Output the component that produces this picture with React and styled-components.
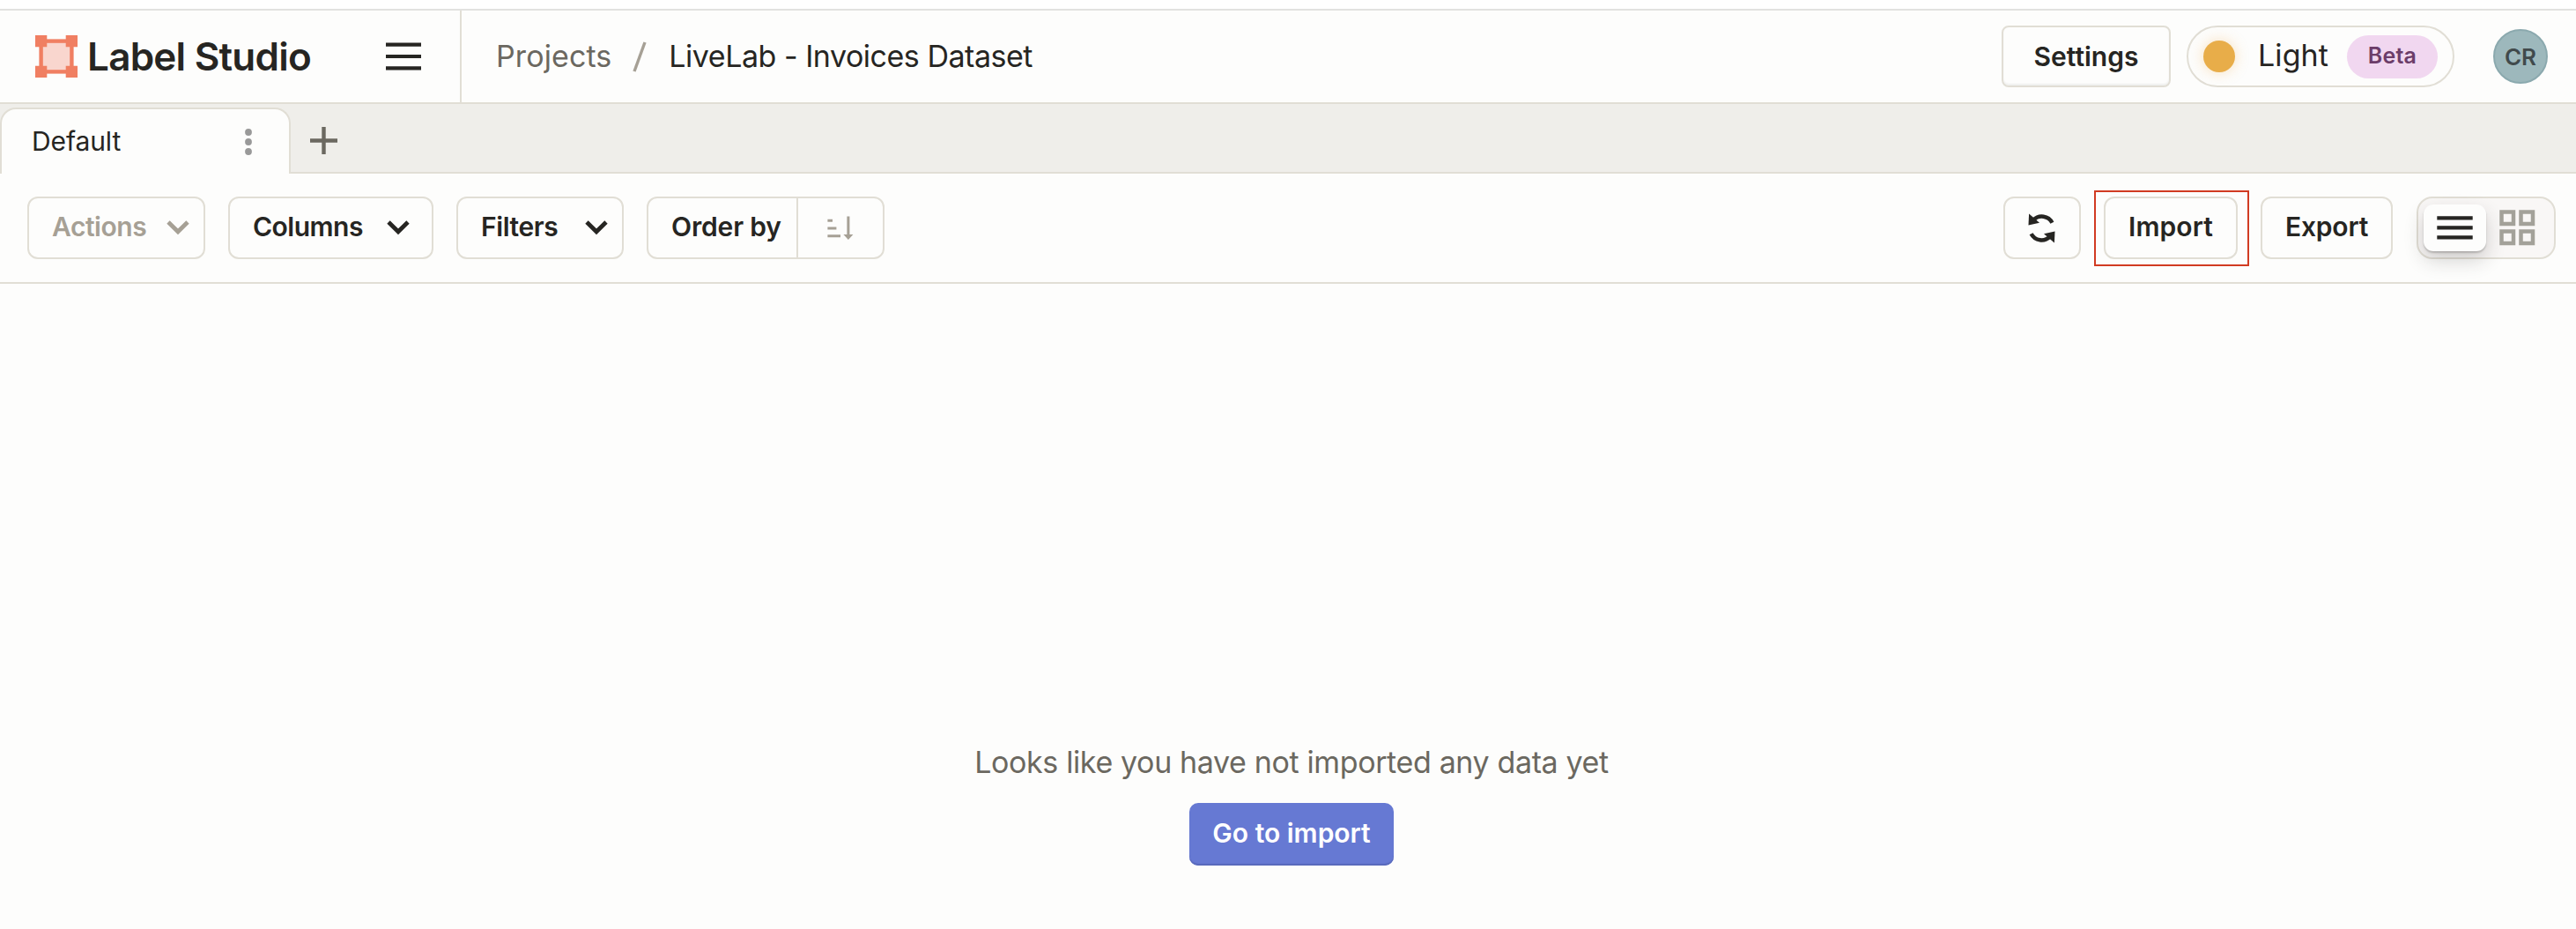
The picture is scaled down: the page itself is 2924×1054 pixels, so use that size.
import React from 'react';
import styled, { createGlobalStyle, css } from 'styled-components';

const c = {
  surface: '#fdfdfc',
  border: '#e1ded5',
  ink: '#262522',
  muted: '#6b6860',
  faint: '#a6a095',
};

const GlobalStyle = createGlobalStyle`
  *, *::before, *::after { box-sizing: border-box; }
  body {
    margin: 0;
    background: ${c.surface};
    color: ${c.ink};
    font-family: Inter, "Liberation Sans", sans-serif;
  }
  button { font: inherit; color: inherit; margin: 0; padding: 0; cursor: pointer; }
  svg { display: block; flex: none; }
`;

const Page = styled.div`
  display: flex;
  flex-direction: column;
  height: 1054px;
  overflow: hidden;
  background: ${c.surface};
`;

const WindowEdge = styled.div`
  height: 12px;
  background: #fff;
  border-bottom: 2px solid #e2e2e0;
`;

/* ---------- header ---------- */

const Header = styled.header`
  display: flex;
  height: 106px;
  border-bottom: 2px solid ${c.border};
`;

const Brand = styled.div`
  display: flex;
  align-items: center;
  width: 524px;
  padding: 0 44px 0 40px;
  border-right: 2px solid ${c.border};
`;

const BrandName = styled.span`
  margin-left: 11px;
  font-size: 44px;
  font-weight: 560;
  line-height: 52px;
  letter-spacing: -0.75px;
  white-space: nowrap;
`;

const MenuButton = styled.button`
  margin-left: auto;
  border: 0;
  background: none;
`;

const Breadcrumbs = styled.nav`
  display: flex;
  align-items: center;
  padding-left: 39px;
  font-size: 34px;
  line-height: 44px;
  white-space: nowrap;
`;

const Crumb = styled.span`
  color: ${(p) => (p.$current ? c.ink : c.muted)};
  letter-spacing: ${(p) => (p.$current ? '-0.48px' : '0.1px')};
`;

const Slash = styled.svg`
  margin: 0 25px 0 24px;
`;

const HeaderActions = styled.div`
  display: flex;
  align-items: center;
  margin-left: auto;
  padding-right: 32px;
`;

const SettingsButton = styled.button`
  width: 192px;
  height: 70px;
  padding-bottom: 1px;
  border: 2px solid ${c.border};
  border-radius: 8px;
  background: ${c.surface};
  box-shadow: inset 0 -2px 2px rgba(38, 37, 34, 0.06);
  font-size: 30px;
  font-weight: 600;
`;

const ThemeSwitch = styled.button`
  display: flex;
  align-items: center;
  width: 304px;
  height: 70px;
  margin-left: 18px;
  padding: 0 17px;
  border: 2px solid ${c.border};
  border-radius: 35px;
  background: none;
`;

const Sun = styled.span`
  width: 36px;
  height: 36px;
  border-radius: 50%;
  background: #e8ad49;
  box-shadow: 0 0 16px rgba(240, 170, 70, 0.35);
`;

const ThemeName = styled.span`
  margin-left: 26px;
  padding-bottom: 2px;
  font-size: 34px;
  line-height: 44px;
  letter-spacing: 0.1px;
`;

const Beta = styled.span`
  display: flex;
  align-items: center;
  justify-content: center;
  width: 103px;
  height: 49px;
  margin-left: auto;
  padding-bottom: 2px;
  border-radius: 25px;
  background: #f1d7f0;
  color: #6c3d69;
  font-size: 25px;
  font-weight: 600;
  letter-spacing: 0.2px;
`;

const Avatar = styled.span`
  display: flex;
  align-items: center;
  justify-content: center;
  width: 62px;
  height: 62px;
  margin-left: 44px;
  border: 2px solid #8ba9ae;
  border-radius: 50%;
  background: #9db8bc;
  color: #414a4c;
  font-size: 26px;
  font-weight: 600;
`;

/* ---------- tabs ---------- */

const TabBar = styled.div`
  display: flex;
  align-items: flex-end;
  height: 79px;
  background: #efeeea;
  box-shadow: inset 0 -2px 0 ${c.border};
`;

const Tab = styled.div`
  display: flex;
  align-items: center;
  justify-content: space-between;
  width: 330px;
  height: 75px;
  padding: 0 42px 0 34px;
  border: 2px solid ${c.border};
  border-bottom: 0;
  border-radius: 18px 18px 0 0;
  background: ${c.surface};
  font-size: 30px;
`;

const TabTitle = styled.span`
  padding-bottom: 1px;
  line-height: 40px;
  letter-spacing: -0.1px;
`;

const AddTab = styled.button`
  align-self: center;
  margin-left: 22px;
  padding-top: 4px;
  border: 0;
  background: none;
`;

/* ---------- toolbar ---------- */

const Toolbar = styled.div`
  display: flex;
  justify-content: space-between;
  height: 125px;
  padding: 26px 23px 0 31px;
  border-bottom: 2px solid ${c.border};
`;

const Group = styled.div`
  display: flex;
  gap: 26px;
`;

const outlined = css`
  height: 71px;
  border: 2px solid ${c.border};
  border-radius: 12px;
  background: ${c.surface};
  font-size: 30px;
  font-weight: 600;
  line-height: 40px;
  white-space: nowrap;
`;

const Button = styled.button`
  ${outlined}
  width: ${(p) => p.$width}px;
  display: flex;
  align-items: center;
  justify-content: center;
`;

const Label = styled.span`
  padding-bottom: 3px;
  letter-spacing: ${(p) => p.$tracking || 0}px;
`;

const Dropdown = styled(Button)`
  justify-content: space-between;
  padding: 0 ${(p) => p.$end}px 0 26px;
  color: ${(p) => (p.$disabled ? c.faint : c.ink)};
`;

const OrderControl = styled.div`
  ${outlined}
  display: flex;
  width: 270px;
  overflow: hidden;
`;

const OrderLabel = styled.button`
  display: flex;
  align-items: center;
  width: 168px;
  padding-left: 26px;
  border: 0;
  background: none;
`;

const OrderDirection = styled.button`
  display: flex;
  flex: 1;
  align-items: center;
  padding-left: 33px;
  border: 0;
  border-left: 2px solid ${c.border};
  background: none;
`;

const RefreshButton = styled(Button)`
  padding: 0 2px 0 0;
`;

const Highlighted = styled.div`
  position: relative;
  &::after {
    content: '';
    position: absolute;
    top: -7px;
    right: -13px;
    left: -11px;
    height: 86px;
    border: 2px solid #d13b22;
    pointer-events: none;
  }
`;

const ViewToggle = styled.div`
  display: flex;
  align-items: center;
  width: 158px;
  height: 71px;
  margin-left: 1px;
  padding: 0 6px;
  border: 2px solid ${c.border};
  border-radius: 18px;
  background: #f9f7f6;
`;

const ViewOption = styled.button`
  display: flex;
  align-items: center;
  justify-content: center;
  width: 71px;
  height: 53px;
  border: 0;
  border-radius: 11px;
  background: ${(p) => (p.$active ? c.surface : 'none')};
  box-shadow: ${(p) =>
    p.$active ? '0 10px 22px rgba(38, 37, 34, 0.2), 0 2px 2px rgba(38, 37, 34, 0.22)' : 'none'};
`;

/* ---------- empty state ---------- */

const EmptyState = styled.main`
  display: flex;
  flex: 1;
  flex-direction: column;
  align-items: center;
  padding: 521px 0 0 8px;
`;

const EmptyText = styled.p`
  margin: 0 0 24px;
  color: ${c.muted};
  font-size: 34px;
  line-height: 44px;
  letter-spacing: -0.37px;
`;

const PrimaryButton = styled.button`
  width: 232px;
  height: 71px;
  padding-bottom: 3px;
  border: 0;
  border-radius: 10px;
  background: #6679d3;
  box-shadow: inset 0 -2px 1px #5869bb;
  color: #fff;
  font-size: 30px;
  font-weight: 600;
`;

/* ---------- icons ---------- */

const Logo = () => (
  <svg width="48" height="48" viewBox="0 0 48 48">
    <rect x="6.6" y="6.6" width="34.8" height="34.8" fill="#f9d6ce" stroke="#f07f62" strokeWidth="4.4" />
    <path d="M0 0h13.3v13.3H0zM34.7 0H48v13.3H34.7zM0 34.7h13.3V48H0zM34.7 34.7H48V48H34.7z" fill="#f07f62" />
  </svg>
);

const MenuIcon = () => (
  <svg width="40" height="32" viewBox="0 0 40 32" fill={c.ink}>
    <path d="M0 .4h40v4.4H0zM0 13.9h40v4.2H0zM0 27.2h40v4.2H0z" />
  </svg>
);

const DotsIcon = () => (
  <svg width="8" height="32" viewBox="0 0 8 32" fill="#999">
    <circle cx="4" cy="5" r="3.9" />
    <circle cx="4" cy="16" r="3.9" />
    <circle cx="4" cy="27" r="3.9" />
  </svg>
);

const PlusIcon = () => (
  <svg width="31" height="31" viewBox="0 0 31 31" stroke={c.muted} strokeWidth="4.4">
    <path d="M15.5 0v31M0 15.5h31" />
  </svg>
);

const Chevron = () => (
  <svg width="26" height="17" viewBox="0 0 26 17" fill="none" stroke="currentColor" strokeWidth="4.8">
    <path d="M2 2l11 10.8L24 2" />
  </svg>
);

const SortIcon = () => (
  <svg width="30" height="28" viewBox="0 0 30 28" fill={c.faint}>
    <path d="M.4 3.8h5.6v3H.4zM.4 12.4h10v3H.4zM.4 21.3h14.6v3H.4zM22.4.6h3v20.3h4L23.9 27l-5.5-6.1h4z" />
  </svg>
);

const RefreshIcon = () => (
  <svg width="31" height="34" viewBox="-15.5 -17 31 34">
    {[0, 180].map((deg) => (
      <g key={deg} transform={`rotate(${deg})`}>
        <path d="M11.9 -6.3A13.3 13.3 0 0 0 -9.4 -9.4" fill="none" stroke={c.ink} strokeWidth="4.5" />
        <path d="M-14.4 -16.5L-15 -3.5L-2.5 -6.2z" fill={c.ink} />
      </g>
    ))}
  </svg>
);

const ListIcon = () => (
  <svg width="41" height="27" viewBox="0 0 41 27" fill={c.ink}>
    <path d="M.3 .2h40.4v4.3H.3zM.3 11.3h40.4v4.3H.3zM.3 22.3h40.4v4.3H.3z" />
  </svg>
);

const GridIcon = () => (
  <svg width="41" height="41" viewBox="0 0 41 41" fill="none" stroke="#a3a199" strokeWidth="4.5">
    <path d="M2.5 2.5h13.5v13.5h-13.5zM24.5 2.5h13.5v13.5h-13.5zM2.5 24.5h13.5v13.5h-13.5zM24.5 24.5h13.5v13.5h-13.5z" />
  </svg>
);

export default function App() {
  return (
    <>
      <GlobalStyle />
      <Page>
        <WindowEdge />
        <Header>
          <Brand>
            <Logo />
            <BrandName>Label Studio</BrandName>
            <MenuButton aria-label="Menu"><MenuIcon /></MenuButton>
          </Brand>
          <Breadcrumbs>
            <Crumb>Projects</Crumb>
            <Slash width="16" height="36" viewBox="0 0 16 36" stroke={c.faint} strokeWidth="3.4">
              <path d="M2 35L14 2" />
            </Slash>
            <Crumb $current>LiveLab - Invoices Dataset</Crumb>
          </Breadcrumbs>
          <HeaderActions>
            <SettingsButton>Settings</SettingsButton>
            <ThemeSwitch>
              <Sun />
              <ThemeName>Light</ThemeName>
              <Beta>Beta</Beta>
            </ThemeSwitch>
            <Avatar>CR</Avatar>
          </HeaderActions>
        </Header>

        <TabBar>
          <Tab>
            <TabTitle>Default</TabTitle>
            <DotsIcon />
          </Tab>
          <AddTab aria-label="Add tab"><PlusIcon /></AddTab>
        </TabBar>

        <Toolbar>
          <Group>
            <Dropdown $width={202} $end={16} $disabled>
              <Label $tracking={-0.45}>Actions</Label>
              <Chevron />
            </Dropdown>
            <Dropdown $width={233} $end={25}>
              <Label $tracking={-0.5}>Columns</Label>
              <Chevron />
            </Dropdown>
            <Dropdown $width={190} $end={16}>
              <Label $tracking={-0.4}>Filters</Label>
              <Chevron />
            </Dropdown>
            <OrderControl>
              <OrderLabel><Label $tracking={-0.15}>Order by</Label></OrderLabel>
              <OrderDirection aria-label="Sort direction"><SortIcon /></OrderDirection>
            </OrderControl>
          </Group>
          <Group>
            <RefreshButton $width={88} aria-label="Refresh"><RefreshIcon /></RefreshButton>
            <Highlighted>
              <Button $width={152}><Label $tracking={0.1}>Import</Label></Button>
            </Highlighted>
            <Button $width={150}><Label $tracking={-0.2}>Export</Label></Button>
            <ViewToggle>
              <ViewOption $active aria-label="List"><ListIcon /></ViewOption>
              <ViewOption aria-label="Grid"><GridIcon /></ViewOption>
            </ViewToggle>
          </Group>
        </Toolbar>

        <EmptyState>
          <EmptyText>Looks like you have not imported any data yet</EmptyText>
          <PrimaryButton>Go to import</PrimaryButton>
        </EmptyState>
      </Page>
    </>
  );
}
